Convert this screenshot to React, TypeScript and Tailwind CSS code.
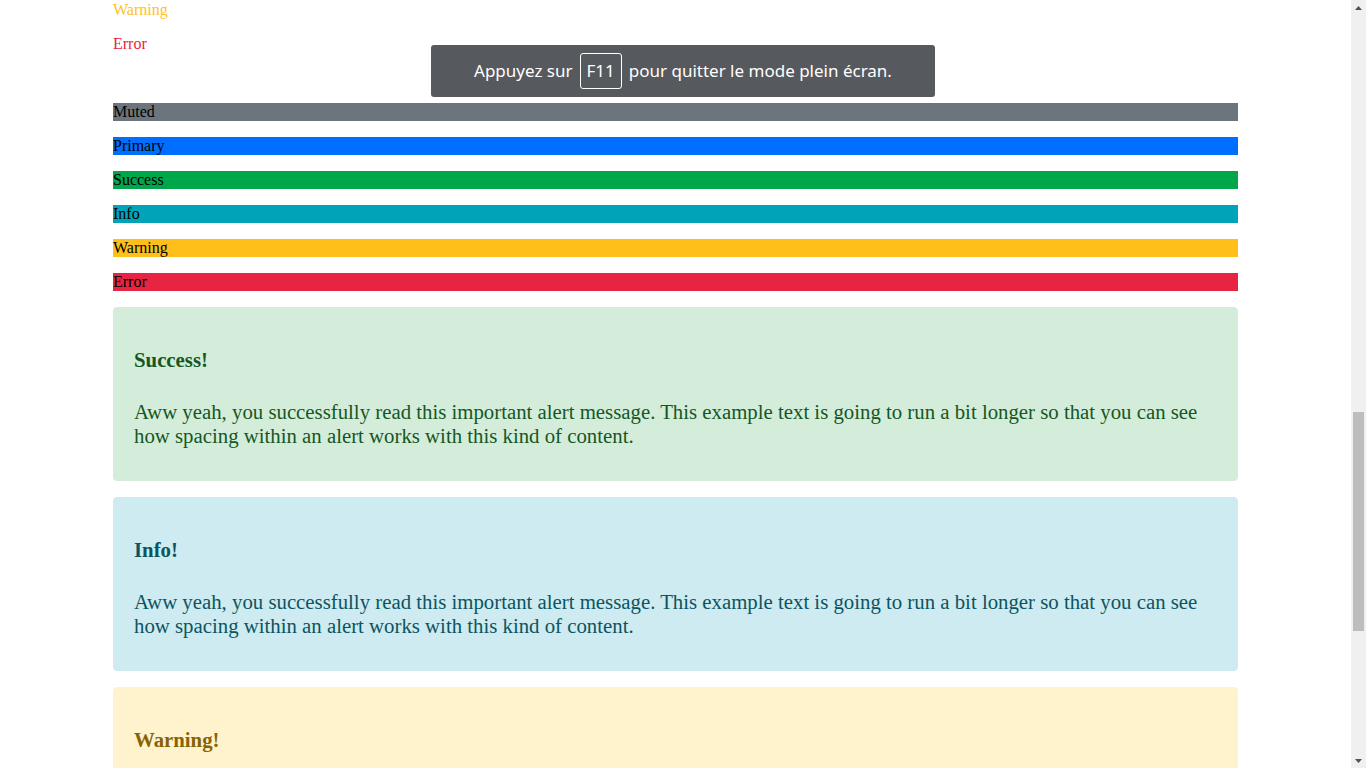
const rows = [
  { label: 'Warning', cls: 'text-[#ffc11e]' },
  { label: 'Error', cls: 'text-[#e8233f]' },
  { label: 'Light', cls: 'text-white' },
  { label: 'Muted', cls: 'bg-[#6c757d] text-black' },
  { label: 'Primary', cls: 'bg-[#006fff] text-black' },
  { label: 'Success', cls: 'bg-[#00a64a] text-black' },
  { label: 'Info', cls: 'bg-[#00a3b8] text-black' },
  { label: 'Warning', cls: 'bg-[#ffbf1a] text-black' },
  { label: 'Error', cls: 'bg-[#e72442] text-black' },
];

const alerts = [
  { title: 'Success!', box: 'bg-[#d4edda] border-[#d4edda] text-[#155724]' },
  { title: 'Info!', box: 'bg-[#cdebf0] border-[#cdebf0] text-[#0c5460]' },
  { title: 'Warning!', box: 'bg-[#fff3cd] border-[#fff3cd] text-[#856404]' },
];

function Arrow({ up }: { up?: boolean }) {
  return (
    <div className="h-[15px] flex items-center justify-center">
      <svg width="7" height="4" viewBox="0 0 7 4">
        <polygon points={up ? '3.5,0 7,4 0,4' : '0,0 7,0 3.5,4'} fill="#505050" />
      </svg>
    </div>
  );
}

export default function App() {
  return (
    <div className="h-screen overflow-hidden flex bg-white" style={{ fontFamily: '"Liberation Serif", serif' }}>
      <div className="flex-1 overflow-hidden">
        <div className="w-[1125px] mx-auto pt-px">
          {rows.map((r, i) => (
            <div key={i} className={`text-base leading-[18px] mb-4 ${r.cls}`}>
              {r.label}
            </div>
          ))}

          {alerts.map((a) => (
            <div key={a.title} className={`border rounded-[4px] px-5 pt-10 pb-8 mb-4 ${a.box}`}>
              <h4 className="text-[20.8px] leading-6 font-bold">{a.title}</h4>
              <p className="text-[20.8px] leading-6 mt-7">
                Aww yeah, you successfully read this important alert message. This example text is going to run a bit
                longer so that you can see how spacing within an alert works with this kind of content.
              </p>
            </div>
          ))}
        </div>
      </div>

      {/* scrollbar */}
      <div className="w-[15px] bg-[#f0f0f0] flex flex-col">
        <Arrow up />
        <div className="flex-1 pt-[397px]">
          <div className="mx-[2px] h-[219px] bg-[#bdbdbd]" />
        </div>
        <Arrow />
      </div>

      {/* fullscreen notice */}
      <div
        className="fixed left-1/2 -translate-x-1/2 top-[45px] w-[504px] h-[52px] rounded-[3px] bg-[#56595e] text-white flex items-center justify-center gap-[7px] text-[17px]"
        style={{ fontFamily: '"Noto Sans", sans-serif' }}
      >
        <span>Appuyez sur</span>
        <span className="border border-white rounded-[3px] h-[36px] px-[6px] flex items-center">F11</span>
        <span>pour quitter le mode plein écran.</span>
      </div>
    </div>
  );
}
